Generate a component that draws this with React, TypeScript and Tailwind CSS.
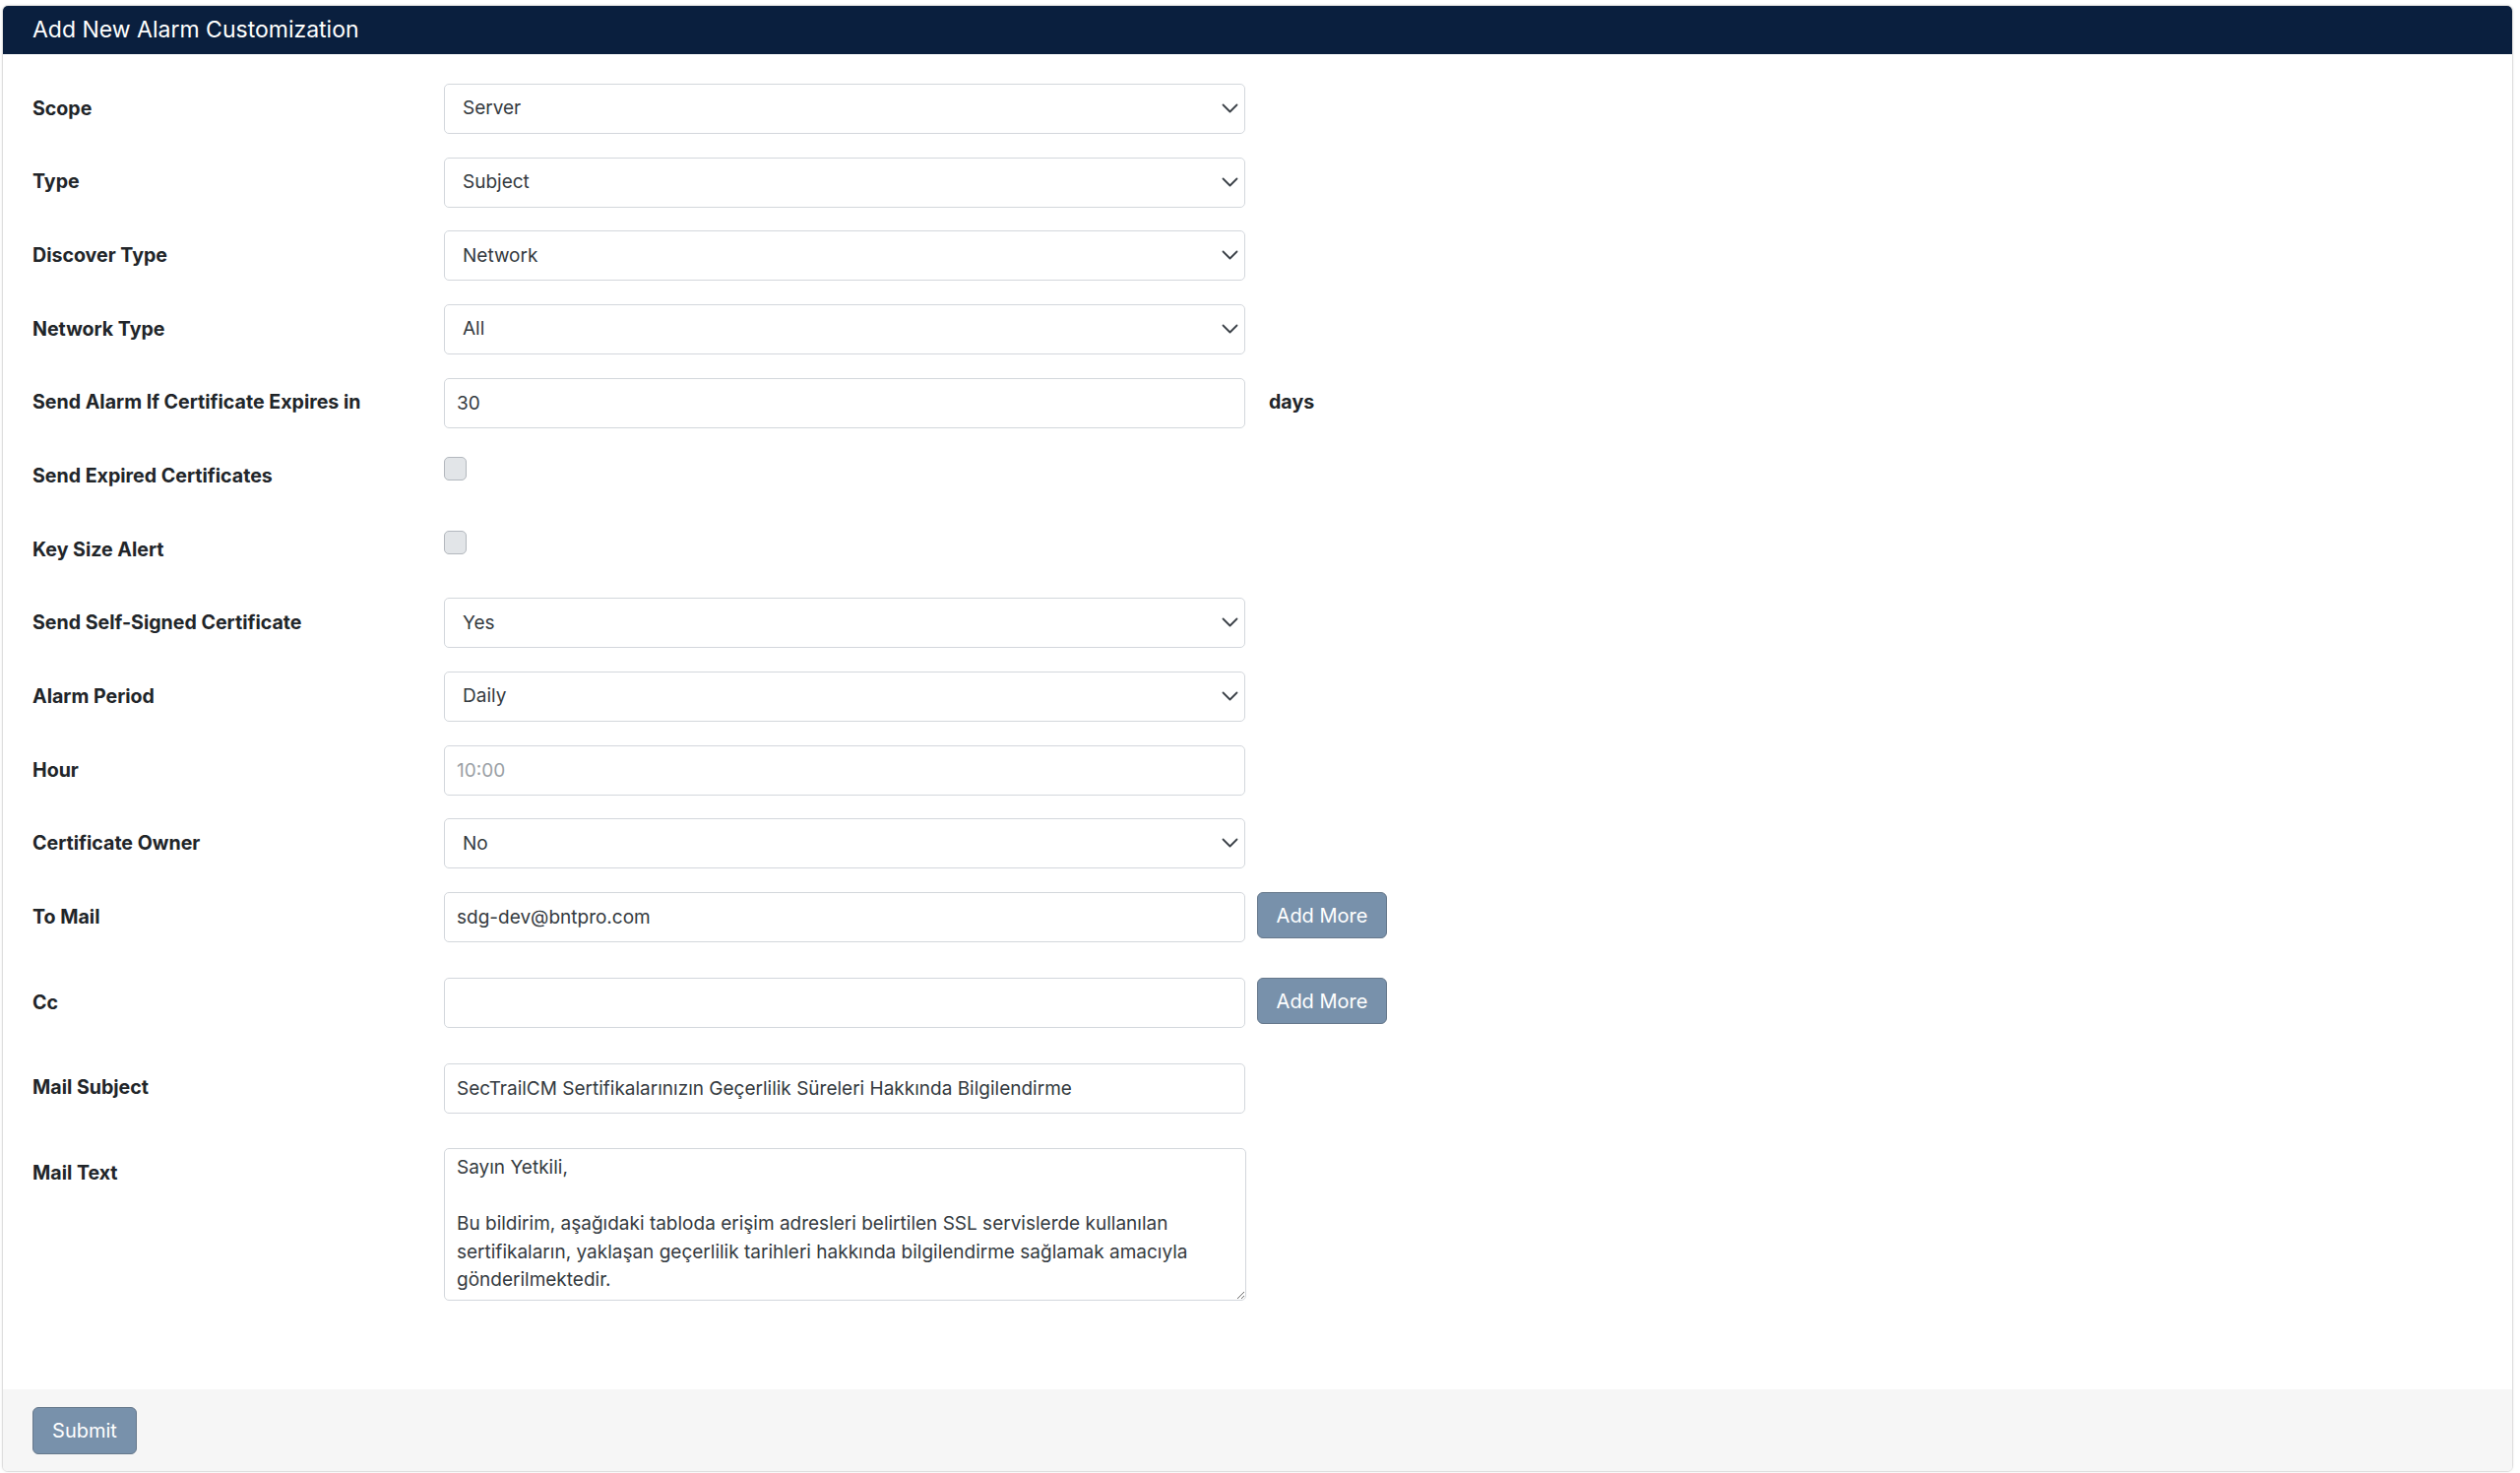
import React from 'react'

const mailText =
  'Sayın Yetkili,\n\nBu bildirim, aşağıdaki tabloda erişim adresleri belirtilen SSL servislerde kullanılan\nsertifikaların, yaklaşan geçerlilik tarihleri hakkında bilgilendirme sağlamak amacıyla\ngönderilmektedir.'

function Label({ children }: { children: React.ReactNode }) {
  return (
    <div className="w-[418px] h-[51px] shrink-0 flex items-center text-[19.6px] font-bold text-[#212529]">
      {children}
    </div>
  )
}

function Row({ label, children }: { label: string; children?: React.ReactNode }) {
  return (
    <div className="flex items-start min-h-[51px]">
      <Label>{label}</Label>
      {children}
    </div>
  )
}

function Select({ value }: { value: string }) {
  return (
    <div className="relative w-[814px] h-[51px]">
      <select
        defaultValue={value}
        className="w-full h-full appearance-none rounded-[5px] border border-[#d3d7dc] bg-white pl-[18px] text-[19px] text-[#343a40] outline-none"
      >
        <option>{value}</option>
      </select>
      <svg
        className="pointer-events-none absolute right-[7px] top-[20px]"
        width="17"
        height="11"
        viewBox="0 0 17 11"
        fill="none"
      >
        <polyline points="1.5,1.5 8.5,8.5 15.5,1.5" stroke="#3b4148" strokeWidth="1.8" strokeLinecap="round" strokeLinejoin="round" />
      </svg>
    </div>
  )
}

function Input({ value, placeholder }: { value?: string; placeholder?: string }) {
  return (
    <input
      defaultValue={value}
      placeholder={placeholder}
      className="w-[814px] h-[51px] rounded-[5px] border border-[#d3d7dc] bg-white pl-[12px] text-[19px] text-[#343a40] placeholder:text-[#9a9fa5] outline-none"
    />
  )
}

function Checkbox() {
  return (
    <input
      type="checkbox"
      className="mt-[6px] w-[23px] h-[24px] appearance-none rounded-[5px] border border-[#b3b8be] bg-[#e2e5e8]"
    />
  )
}

function Btn({ children, className = '' }: { children: React.ReactNode; className?: string }) {
  return (
    <button
      className={`rounded-[6px] border border-[#66788b] bg-[#7891ab] text-white text-[20px] ${className}`}
    >
      {children}
    </button>
  )
}

export default function App() {
  return (
    <div className="min-h-[1496px] bg-white pt-[5px] pl-[2px] pr-[7px] font-[Inter,'Noto_Sans',sans-serif]">
      <div className="rounded-[6px] border border-[#dedede] shadow-[0_0_3px_rgba(0,0,0,0.08)] overflow-hidden">
        <div className="h-[49px] bg-[#0a1f3e] px-[30px] flex items-center text-[23px] text-white">
          Add New Alarm Customization
        </div>

        <div className="pl-[30px] pt-[30px] pb-[90px]">
          <div className="flex flex-col gap-[23.65px]">
            <Row label="Scope"><Select value="Server" /></Row>
            <Row label="Type"><Select value="Subject" /></Row>
            <Row label="Discover Type"><Select value="Network" /></Row>
            <Row label="Network Type"><Select value="All" /></Row>
            <Row label="Send Alarm If Certificate Expires in">
              <Input value="30" />
              <div className="h-[51px] ml-[24px] flex items-center text-[19.6px] font-bold text-[#212529]">days</div>
            </Row>
            <Row label="Send Expired Certificates"><Checkbox /></Row>
            <Row label="Key Size Alert"><Checkbox /></Row>
            <Row label="Send Self-Signed Certificate"><Select value="Yes" /></Row>
            <Row label="Alarm Period"><Select value="Daily" /></Row>
            <Row label="Hour"><Input placeholder="10:00" /></Row>
            <Row label="Certificate Owner"><Select value="No" /></Row>
            <Row label="To Mail">
              <Input value="sdg-dev@bntpro.com" />
              <Btn className="ml-[12px] w-[132px] h-[47px]">Add More</Btn>
            </Row>
          </div>
          <div className="mt-[36px] flex flex-col gap-[35.5px]">
            <Row label="Cc">
              <Input />
              <Btn className="ml-[12px] w-[132px] h-[47px]">Add More</Btn>
            </Row>
            <Row label="Mail Subject">
              <Input value="SecTrailCM Sertifikalarınızın Geçerlilik Süreleri Hakkında Bilgilendirme" />
            </Row>
            <Row label="Mail Text">
              <textarea
                defaultValue={mailText}
                className="w-[815px] h-[155px] rounded-[5px] border border-[#d3d7dc] bg-white pl-[12px] pr-[12px] pt-[5px] text-[19px] leading-[28.6px] text-[#343a40] outline-none"
              />
            </Row>
          </div>
        </div>

        <div className="h-[83px] bg-[#f6f6f6] pt-[18px] pl-[30px]">
          <Btn className="w-[106px] h-[48px]">Submit</Btn>
        </div>
      </div>
    </div>
  )
}
